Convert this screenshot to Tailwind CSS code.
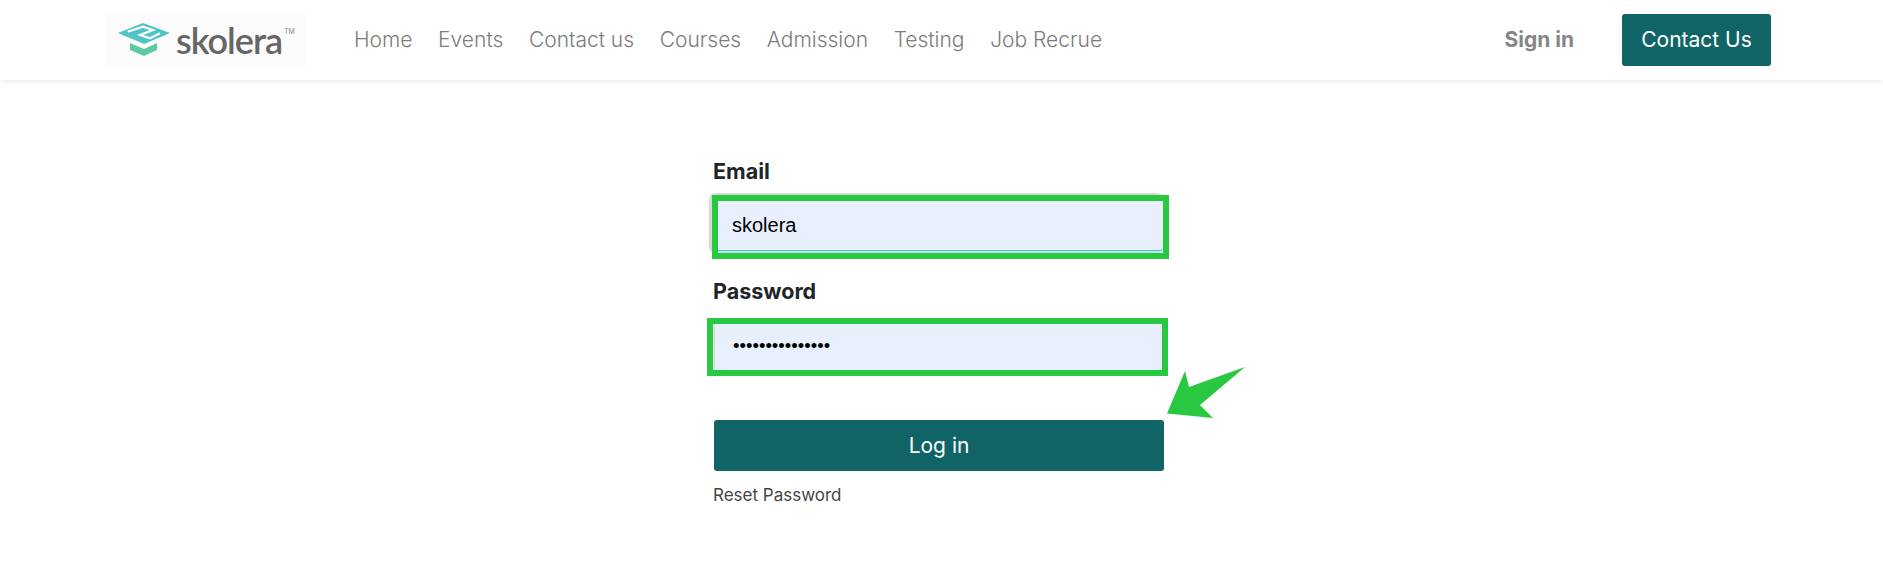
<!DOCTYPE html>
<html lang="en">
<head>
    <meta charset="UTF-8">
    <meta name="viewport" content="width=device-width, initial-scale=1.0">
    <title>Skolera Login</title>
    <script src="https://cdn.jsdelivr.net/npm/@tailwindcss/browser@4"></script>
</head>
<body class="bg-white font-[Inter,sans-serif] h-[563px] overflow-hidden">

    <!-- Top bar -->
    <header class="h-[80px] flex items-center bg-white shadow-[0_2px_6px_rgba(0,0,0,0.08)] pl-[106px] pr-[112px]">
        <div class="w-[200px] h-[54px] bg-[#fcfcfc] flex items-center pl-[12px] shrink-0">
            <svg class="w-[52px] h-[34px] shrink-0" viewBox="0 0 52 34">
                <path d="M12 20 L26 26 L39 20 L39 27 L26 33 L12 27 Z" fill="#5fc9a5"/>
                <path d="M0 10 L25 0 L52 10 L26 21 Z" fill="#4fc3c6"/>
                <path d="M9.7 8.7 L25 3.7 L35 7 L22 12 L32 15.3 L42 10.3" fill="none" stroke="#fcfcfc" stroke-width="2.2"/>
            </svg>
            <span class="ml-[6px] text-[36px] leading-none font-semibold text-[#666] font-[Lato,sans-serif] tracking-[-1px]">skolera</span>
            <span class="self-start mt-[15px] ml-[2px] text-[7px] leading-none text-[#888]">TM</span>
        </div>
        <nav class="ml-[48px] flex items-center gap-[25.6px] text-[21px] font-light text-[#7c7c7c]">
            <a href="#">Home</a>
            <a href="#">Events</a>
            <a href="#">Contact us</a>
            <a href="#">Courses</a>
            <a href="#">Admission</a>
            <a href="#">Testing</a>
            <a href="#">Job Recrue</a>
        </nav>
        <a href="#" class="ml-auto text-[21px] font-bold text-[#868686]">Sign in</a>
        <button class="ml-[48px] w-[149px] h-[52px] bg-[#106466] rounded-[3px] text-white text-[21px]">Contact Us</button>
    </header>

    <!-- Login form -->
    <main class="ml-[714px] w-[450px] pt-[79px]">
        <label class="block -ml-[1px] text-[21.5px] leading-[24px] font-bold text-[#212529]">Email</label>
        <div class="relative mt-[10px] h-[60px] pt-[2px]">
            <input type="text" value="skolera" class="w-full h-[56px] pl-[18px] pt-[5px] bg-[#e8f0fe] border-b border-b-[#1fd6e6] rounded-[4px] shadow-[-3px_0_0_2px_#d8d8d8] text-[20px] text-black font-[Arial,'Liberation_Sans',sans-serif]">
            <div class="absolute left-[-2px] right-[-5px] top-[2px] bottom-[-6px] border-[6px] border-[#28c840]"></div>
        </div>
        <label class="block -ml-[1px] mt-[26px] text-[21.5px] leading-[24px] font-bold text-[#212529]">Password</label>
        <div class="relative mt-[15px] h-[58px]">
            <input type="password" value="skolera12345678" class="w-full h-full pl-[18px] pb-[2px] bg-[#e8f0fe] border border-[#d4d4d4] rounded-[4px] text-[18.5px] text-black font-[Arial,'Liberation_Sans',sans-serif]">
            <div class="absolute left-[-7px] right-[-4px] top-0 bottom-0 border-[6px] border-[#28c840]"></div>
        </div>
        <button class="relative block w-full h-[51px] mt-[44px] bg-[#106466] rounded-[3px] text-white text-[21px]">
            Log in
            <!-- annotation arrow -->
            <svg class="absolute left-[450px] top-[-53px] w-[84px] h-[54px]" viewBox="0 0 84 54">
                <path d="M3 46.5 L21 4 L25 20 L81 0 L36 38 L49 51 Z" fill="#28c840"/>
            </svg>
        </button>
        <a href="#" class="block -ml-[1px] mt-[14px] text-[17px] leading-[20px] text-[#444]">Reset Password</a>
    </main>
</body>
</html>
